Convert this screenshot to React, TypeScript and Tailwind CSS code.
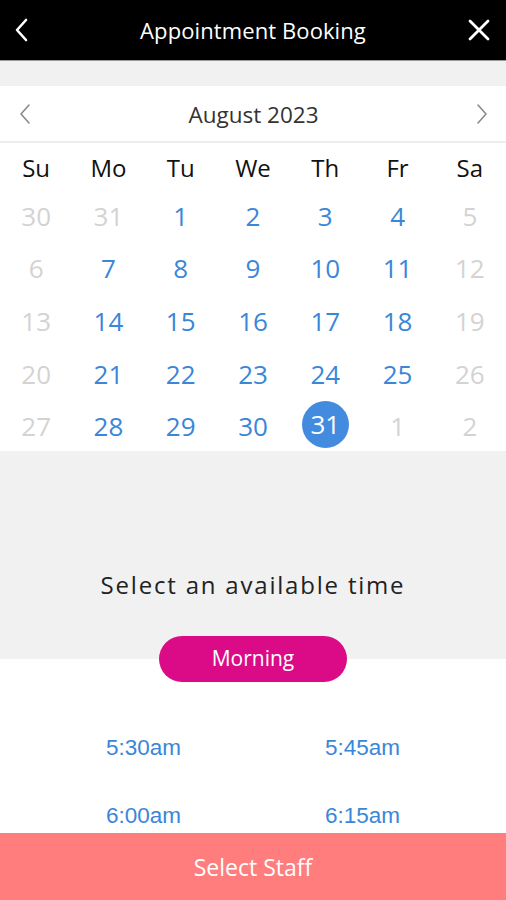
import React from "react";

const weeks: { d: number; cur: boolean }[][] = [
  [30, 31, 1, 2, 3, 4, 5],
  [6, 7, 8, 9, 10, 11, 12],
  [13, 14, 15, 16, 17, 18, 19],
  [20, 21, 22, 23, 24, 25, 26],
  [27, 28, 29, 30, 31, 1, 2],
].map((row, ri) =>
  row.map((d, ci) => {
    const outside = (ri === 0 && d > 20) || (ri === 4 && d < 10);
    const weekend = ci === 0 || ci === 6;
    return { d, cur: !outside && !weekend };
  })
);

const days = ["Su", "Mo", "Tu", "We", "Th", "Fr", "Sa"];
const times = ["5:30am", "5:45am", "6:00am", "6:15am", "6:30am", "6:45am"];

export default function App() {
  return (
    <div className="relative h-[900px] overflow-hidden bg-white font-['Open_Sans',sans-serif]">
      {/* top bar */}
      <div className="flex h-[61px] items-center bg-black px-[15px] text-white border-b border-[#9a9a9a]">
        <div className="flex w-[30px] justify-start">
          <svg width="14" height="24" viewBox="0 0 14 24" fill="none">
            <polyline points="11,2 2,12 11,22" stroke="white" strokeWidth="2.6" strokeLinecap="round" strokeLinejoin="round" />
          </svg>
        </div>
        <div className="flex-1 text-center text-[22px] leading-none tracking-[0.1px]">Appointment Booking</div>
        <div className="flex w-[30px] justify-end">
          <svg width="22" height="22" viewBox="0 0 22 22" fill="none" className="mr-[1px]">
            <path d="M2 2 L20 20 M20 2 L2 20" stroke="white" strokeWidth="2.8" strokeLinecap="round" />
          </svg>
        </div>
      </div>
      <div className="h-[25px] bg-[#f1f1f1]" />

      {/* calendar */}
      <div className="flex h-[57px] items-center justify-between border-b-2 border-[#ececec] pl-[18px] pr-[17px]">
        <svg width="14" height="22" viewBox="0 0 14 22" fill="none">
          <polyline points="11,2 3,11 11,20" stroke="#8a8a8a" strokeWidth="1.6" strokeLinecap="round" strokeLinejoin="round" />
        </svg>
        <div className="mt-[2px] text-[22.5px] text-[#333]">August 2023</div>
        <svg width="14" height="22" viewBox="0 0 14 22" fill="none">
          <polyline points="3,2 11,11 3,20" stroke="#8a8a8a" strokeWidth="1.6" strokeLinecap="round" strokeLinejoin="round" />
        </svg>
      </div>
      <div className="grid h-[45px] grid-cols-7 items-center pt-[4px] text-center text-[24px] text-[#111]">
        {days.map((d) => (
          <div key={d}>{d}</div>
        ))}
      </div>
      {weeks.map((row, i) => (
        <div key={i} className="grid h-[52.6px] grid-cols-7 items-center text-center text-[26px]">
          {row.map((c, j) => {
            const selected = i === 4 && c.d === 31;
            return (
              <div key={j} className="flex items-center justify-center">
                {selected ? (
                  <div className="flex h-[47px] w-[47px] items-center justify-center rounded-full bg-[#438bdf] text-white">
                    {c.d}
                  </div>
                ) : (
                  <span className={"mt-[4px] " + (c.cur ? "text-[#3a86d9]" : "text-[#d3d3d3]")}>{c.d}</span>
                )}
              </div>
            );
          })}
        </div>
      ))}

      {/* time selection */}
      <div className="h-[208px] bg-[#f1f1f1] pt-[118px] text-center">
        <div className="text-[24px] leading-[32px] tracking-[1.8px] text-[#222]">Select an available time</div>
      </div>
      <div className="relative z-10 mx-auto -mt-[23px] flex h-[46px] w-[188px] items-center justify-center rounded-full bg-[#db0a86] text-[21px] font-medium text-white">
        Morning
      </div>
      <div className="mt-[32px] grid grid-cols-2 px-[34px] font-['Liberation_Sans',Arial,sans-serif] text-[22.5px] text-[#3a86d9]">
        {times.map((t) => (
          <div key={t} className="flex h-[68px] items-center justify-center">
            {t}
          </div>
        ))}
      </div>

      {/* bottom action */}
      <div className="absolute bottom-0 left-0 right-0 flex h-[67px] items-center justify-center bg-[#ff7d7c] pt-[2px] text-[23px] text-white">
        Select Staff
      </div>
    </div>
  );
}
